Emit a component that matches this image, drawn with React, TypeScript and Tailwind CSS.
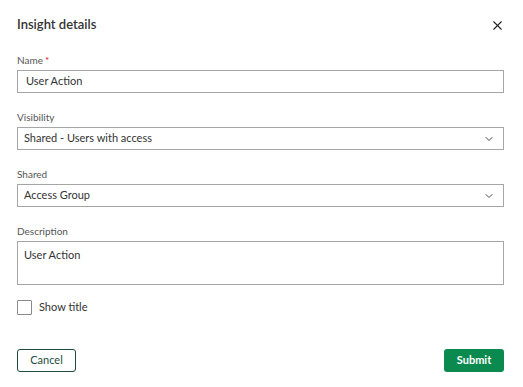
import { ChevronDown, X } from 'lucide-react';

const Label = ({ children, required }: { children: string; required?: boolean }) => (
	<div className="text-[10px] leading-[12px] text-[#555] mb-[4px]">
		{children}
		{required && <span className="text-[#d0103a] ml-[2px]">*</span>}
	</div>
);

const Select = ({ value }: { value: string }) => (
	<div className="flex items-center justify-between h-[23px] border border-[#a6a6a6] pl-[6px] pr-[8px] text-[11px] text-[#333]">
		<span>{value}</span>
		<ChevronDown className="w-[12px] h-[12px] text-[#333]" strokeWidth={1.75} />
	</div>
);

const App = () => {
	return (
		<div
			className="w-[523px] h-[387px] bg-white px-[17px] pr-[19px] pt-[16px]"
			style={{ fontFamily: 'Lato, "Open Sans", sans-serif' }}
		>
			<div className="flex items-center justify-between h-[18px]">
				<h1 className="text-[13px] font-semibold text-[#333]">Insight details</h1>
				<X className="w-[15px] h-[15px] text-[#222] mr-[-1px]" strokeWidth={1.75} />
			</div>

			<div className="mt-[20px]">
				<Label required>Name</Label>
				<div className="flex items-center h-[23px] border border-[#a6a6a6] px-[8px] text-[11px] text-[#333]">
					User Action
				</div>
			</div>

			<div className="mt-[18px]">
				<Label>Visibility</Label>
				<Select value="Shared - Users with access" />
			</div>

			<div className="mt-[18px]">
				<Label>Shared</Label>
				<Select value="Access Group" />
			</div>

			<div className="mt-[18px]">
				<Label>Description</Label>
				<div className="h-[44px] border border-[#a6a6a6] px-[6px] pt-[5px] text-[11px] text-[#333]">
					User Action
				</div>
			</div>

			<label className="flex items-center gap-[7px] mt-[14px]">
				<span className="w-[15px] h-[15px] border border-[#8a8a8a] rounded-[1px] bg-white" />
				<span className="text-[11px] text-[#333]">Show title</span>
			</label>

			<div className="flex items-center justify-between mt-[33px]">
				<button className="h-[23px] w-[59px] border border-[#1e4b3d] rounded-[3px] text-[11px] text-[#1e4b3d] bg-white">
					Cancel
				</button>
				<button className="h-[23px] w-[60px] rounded-[3px] bg-[#0b8a50] text-[11px] font-bold text-white">
					Submit
				</button>
			</div>
		</div>
	);
};

export default App;
